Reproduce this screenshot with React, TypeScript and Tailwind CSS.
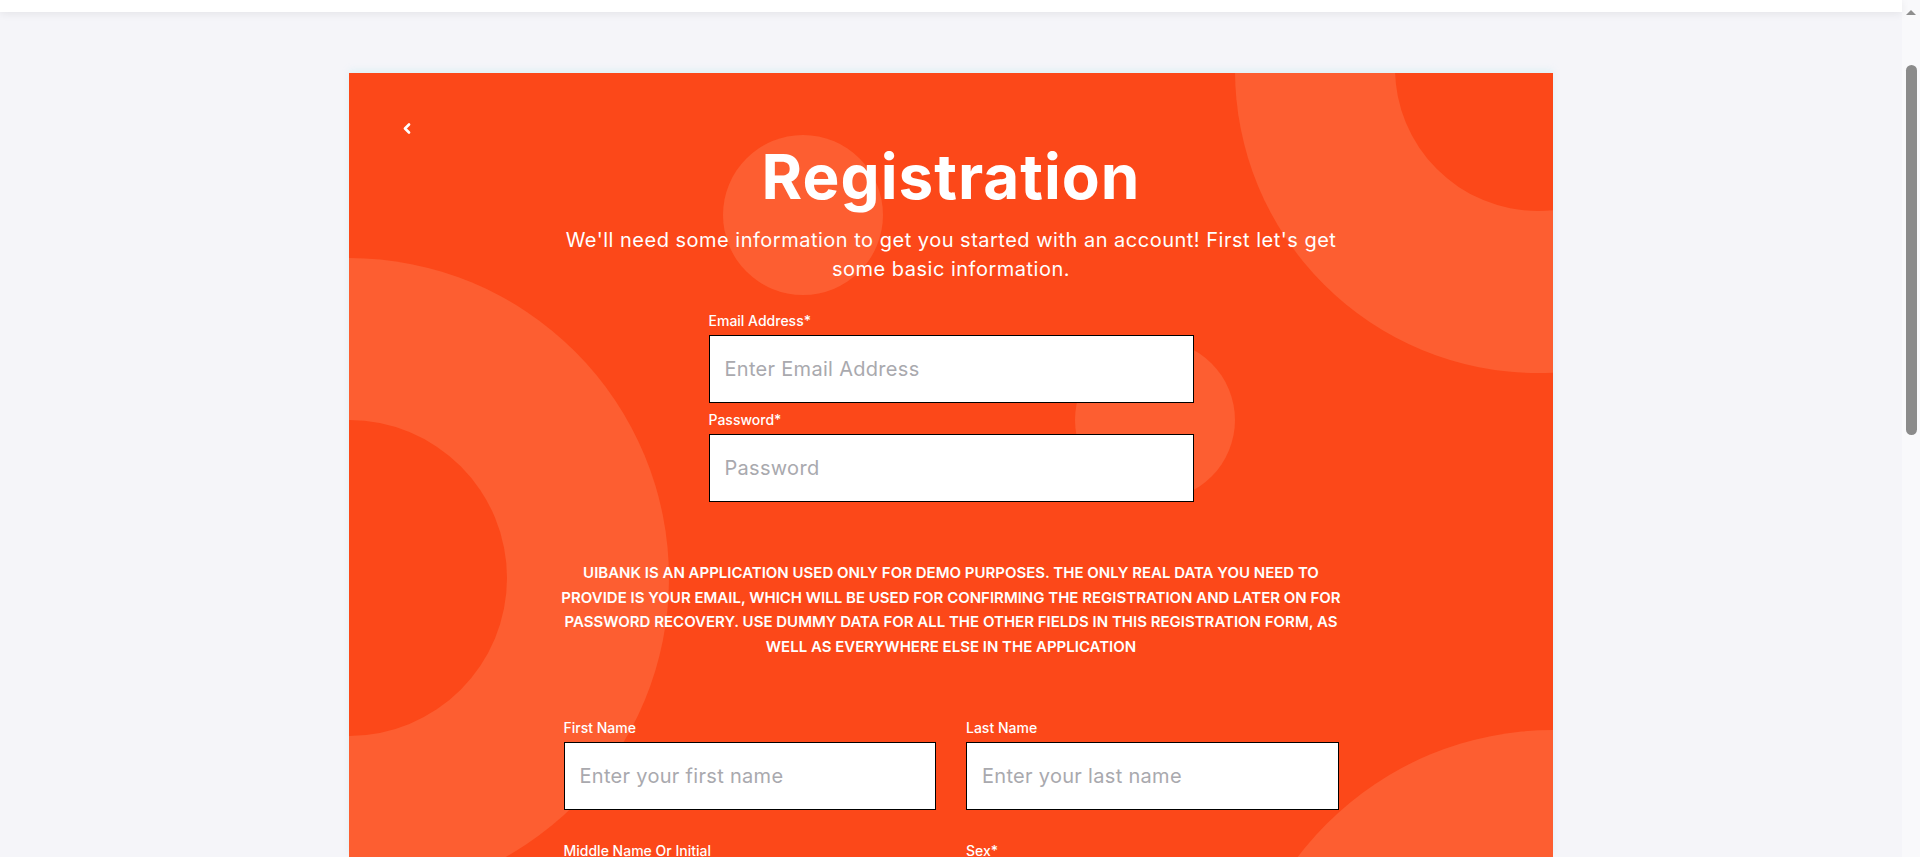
import React from 'react';

const Field: React.FC<{ label: string; placeholder: string; type?: string }> = ({ label, placeholder, type = 'text' }) => (
  <div className="flex flex-col">
    <label className="text-[14px] leading-[20px] font-medium text-white mb-[4px]">{label}</label>
    <input
      type={type}
      placeholder={placeholder}
      className="h-[68px] w-full bg-white border border-black pl-[15px] text-[20px] tracking-[0.3px] text-gray-800 outline-none placeholder:text-[#a9a9ae]"
    />
  </div>
);

const App: React.FC = () => {
  return (
    <div className="flex h-[857px] w-full overflow-hidden bg-[#f5f5f9] font-[Inter,sans-serif]">
      <div className="flex-1 min-w-0 flex flex-col">
        {/* top bar */}
        <div className="h-[12px] bg-white shadow-[0_2px_8px_rgba(0,0,0,0.07)] relative z-10" />

        <div className="pt-[61px] flex justify-center">
          <main className="relative w-[1204px] h-[784px] overflow-hidden bg-[#fc4819] shadow-[0_-3px_6px_rgba(215,240,245,0.7)]">
            {/* decorative circles */}
            <div className="absolute left-[-320px] top-[185px] w-[640px] h-[640px] rounded-full bg-[#fd5e31]" />
            <div className="absolute left-[-158px] top-[347px] w-[316px] h-[316px] rounded-full bg-[#fc4819]" />
            <div className="absolute left-[886px] top-[-306px] w-[606px] h-[606px] rounded-full bg-[#fd5e31]" />
            <div className="absolute left-[1046px] top-[-148px] w-[286px] h-[286px] rounded-full bg-[#fc4819]" />
            <div className="absolute left-[374px] top-[62px] w-[160px] h-[160px] rounded-full bg-[#fd5e31]" />
            <div className="absolute left-[726px] top-[267px] w-[160px] h-[160px] rounded-full bg-[#fd5e31]" />
            <div className="absolute left-[884px] top-[657px] w-[640px] h-[640px] rounded-full bg-[#fd5e31]" />

            <div className="relative flex flex-col items-center">
              {/* back */}
              <div className="self-start h-[73px] pt-[50px] pl-[53px]">
                <svg width="9" height="11" viewBox="0 0 9 11">
                  <path d="M7 1.5 L3 5.5 L7 9.5" fill="none" stroke="white" strokeWidth="2.6" strokeLinecap="round" strokeLinejoin="round" />
                </svg>
              </div>

              <h1 className="text-[62px] leading-[62px] font-bold text-white tracking-[1px]">Registration</h1>

              <p className="mt-[18px] text-[20px] leading-[29px] tracking-[0.5px] text-white text-center">
                We'll need some information to get you started with an account! First let's get
                <br />
                some basic information.
              </p>

              {/* credentials */}
              <div className="w-[485px] mt-[27px] flex flex-col">
                <Field label="Email Address*" placeholder="Enter Email Address" type="email" />
                <div className="mt-[7px]">
                  <Field label="Password*" placeholder="Password" type="password" />
                </div>
              </div>

              <p className="mt-[59px] w-[820px] text-[15px] leading-[24.5px] font-semibold uppercase text-white text-center">
                UIBank is an application used only for demo purposes. The only real data you need to
                <br />
                provide is your email, which will be used for confirming the registration and later on for
                <br />
                password recovery. Use dummy data for all the other fields in this registration form, as
                <br />
                well as everywhere else in the application
              </p>

              {/* personal details */}
              <div className="w-[775px] mt-[59px] grid grid-cols-2 gap-x-[30px] gap-y-[31px]">
                <Field label="First Name" placeholder="Enter your first name" />
                <Field label="Last Name" placeholder="Enter your last name" />
                <Field label="Middle Name Or Initial" placeholder="Enter your middle name" />
                <Field label="Sex*" placeholder="Select" />
              </div>
            </div>
          </main>
        </div>
      </div>

      {/* scrollbar */}
      <div className="w-[18px] h-full bg-[#f9f9fb] flex flex-col items-center">
        <div className="mt-[10px] w-0 h-0 border-l-[5px] border-r-[5px] border-b-[5px] border-l-transparent border-r-transparent border-b-[#8e8e8e]" />
        <div className="mt-[50px] w-[11px] h-[370px] rounded-full bg-[#8b8b8b]" />
      </div>
    </div>
  );
};

export default App;
